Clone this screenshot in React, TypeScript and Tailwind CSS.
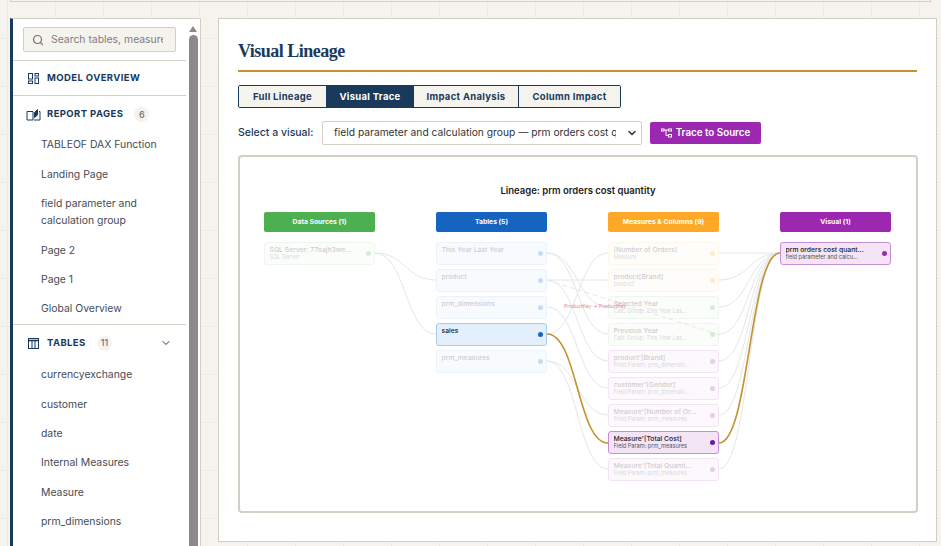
import { Search, ChevronDown } from "lucide-react";
import type { ReactNode } from "react";

const INK = "#1a3a5c";
const GOLD = "#c4922e";

type Tone = "green" | "blue" | "orange" | "purple";
type NodeT = { t: string; s?: string; dim?: boolean; strong?: boolean; tone?: Tone };

function DiagramNode({ n, tone }: { n: NodeT; tone: Tone }) {
  const cls = {
    green: "border-[#b5dfb7] bg-[#eef8ee]",
    blue: "border-[#a9cbee] bg-[#e3f0fc]",
    orange: "border-[#ffdca6] bg-[#fff7ea]",
    purple: "border-[#c98ad6] bg-[#f3e4f6]",
  }[tone];
  const strong = tone === "blue" ? "border-[#2a74c4]" : "border-[#7b3fa8]";
  const dot = {
    green: "bg-[#4caf50]",
    blue: "bg-[#1565c0]",
    orange: "bg-[#ffa726]",
    purple: n.strong ? "bg-[#6a1b9a]" : "bg-[#9c27b0]",
  }[tone];
  return (
    <div className={`relative h-[23px] w-[111px] rounded-[3px] border px-[4.500px] pt-[3px] ${cls} ${n.strong ? strong : ""} ${n.dim ? "opacity-[0.23]" : ""}`}>
      <div className="truncate pr-3 text-[6.800px] leading-[8px] font-medium text-[#222222]">{n.t}</div>
      {n.s && <div className="truncate pr-3 text-[5.600px] leading-[7px] text-[#555555]">{n.s}</div>}
      <span className={`absolute top-[8px] right-[3.500px] h-[5px] w-[5px] rounded-full ${dot}`} />
    </div>
  );
}

function Column({ title, color, nodes, tone }: { title: string; color: string; nodes: NodeT[]; tone: Tone }) {
  return (
    <div className="flex w-[111px] flex-col">
      <div className={`mb-[10px] flex h-[20px] items-center justify-center rounded-[2px] text-[6.800px] font-bold text-white ${color}`}>{title}</div>
      <div className="flex flex-col gap-[4px]">
        {nodes.map((n) => (
          <DiagramNode key={n.t} n={n} tone={n.tone ?? tone} />
        ))}
      </div>
    </div>
  );
}

const curve = (x1: number, y1: number, x2: number, y2: number) => {
  const m = (x1 + x2) / 2;
  return `M${x1} ${y1} C${m} ${y1} ${m} ${y2} ${x2} ${y2}`;
};

const faint: [number, number, number, number][] = [
  [375, 253, 436, 280],
  [375, 253, 436, 334],
  [547, 253, 608, 307],
  [547, 253, 608, 334],
  [547, 280, 608, 280],
  [547, 334, 608, 253],
  [547, 280, 608, 361],
  [547, 307, 608, 388],
  [547, 361, 608, 415],
  [547, 361, 608, 469],
  [719, 253, 780, 253],
  [719, 280, 780, 253],
  [719, 307, 780, 253],
  [719, 334, 780, 253],
  [719, 361, 780, 253],
  [719, 388, 780, 253],
  [719, 415, 780, 253],
  [719, 469, 780, 253],
];

function NavItem({ children }: { children: ReactNode }) {
  return <div className="py-[6.200px] pl-[28px] text-[10.400px] leading-[17px] text-[#444c56]">{children}</div>;
}

function Heading({ icon, label, badge, chevron }: { icon: ReactNode; label: string; badge?: string; chevron?: boolean }) {
  return (
    <div className="flex h-[15px] items-center pr-[14px] pl-[13px]">
      <span className="flex w-[21px] shrink-0 items-center">{icon}</span>
      <span className="text-[9.500px] font-bold tracking-[0.4px] whitespace-nowrap text-[#1a3a5c]">{label}</span>
      {badge && (
        <span className="ml-[11px] flex h-[15px] min-w-[15px] items-center justify-center rounded-full bg-[#f5f3ee] px-[4px] text-[9px] font-medium text-[#6b7280]">{badge}</span>
      )}
      {chevron && <ChevronDown className="ml-auto" size={12} color={INK} strokeWidth={2} />}
    </div>
  );
}

export default function App() {
  return (
    <div className="h-[546px] w-[941px] overflow-hidden bg-[#f5f3ee] bg-[linear-gradient(#eeebe4_1px,transparent_1px),linear-gradient(90deg,#eeebe4_1px,transparent_1px)] bg-[size:48px_48px] bg-[position:7px_38px] font-['Inter','Liberation_Sans',sans-serif]">
      <div className="mx-[10px] h-[2px] border-x border-b border-[#d4cfc4]" />
      <div className="flex items-start gap-[17px] pt-[16px] pl-[10px]">
        {/* Sidebar */}
        <aside className="flex h-[530px] w-[191px] shrink-0 overflow-hidden border-y border-r border-l-[3px] border-y-[#d4cfc4] border-r-[#d4cfc4] border-l-[#1a3a5c] bg-white">
          <div className="w-[173px] shrink-0">
            <div className="border-b border-[#d4cfc4] px-[10px] pt-[8px] pb-[8px]">
              <div className="flex h-[25px] w-[153px] items-center rounded-[2px] border border-[#d4cfc4] bg-[#f5f3ee] pl-[8px]">
                <Search size={12} color="#7a6f62" strokeWidth={2.4} className="shrink-0" />
                <span className="ml-[7px] w-[112px] overflow-hidden text-[10.400px] whitespace-nowrap text-[#7d7d7d]">Search tables, measures</span>
              </div>
            </div>
            <div className="flex h-[35px] items-center border-b border-[#d4cfc4]">
              <Heading
                label="MODEL OVERVIEW"
                icon={
                  <svg className="ml-[2px]" width="11" height="11" viewBox="0 0 11 11" fill="none" stroke={INK} strokeWidth="1">
                    <rect x="0.500" y="0.500" width="4" height="5.500" />
                    <rect x="7" y="0.500" width="3.500" height="2.500" />
                    <rect x="0.500" y="8" width="4" height="2.500" />
                    <rect x="7" y="5" width="3.500" height="5.500" />
                  </svg>
                }
              />
            </div>
            <div className="pt-[11px]">
              <Heading
                label="REPORT PAGES"
                badge="6"
                icon={
                  <svg width="15" height="12" viewBox="0 0 15 12" fill="none" stroke={INK} strokeWidth="1">
                    <path d="M1 2.500h6v8.500H1z" />
                    <path d="M8 11h6V2.500h-1" />
                    <path d="M8.500 8.500V3.500l3-3v5.500z" fill={INK} />
                  </svg>
                }
              />
            </div>
            <div className="pt-[8.300px]">
              <NavItem>TABLEOF DAX Function</NavItem>
              <NavItem>Landing Page</NavItem>
              <NavItem>
                field parameter and
                <br />
                calculation group
              </NavItem>
              <NavItem>Page 2</NavItem>
              <NavItem>Page 1</NavItem>
              <NavItem>Global Overview</NavItem>
            </div>
            <div className="border-t border-[#d4cfc4] pt-[11px]">
              <Heading
                label="TABLES"
                badge="11"
                chevron
                icon={
                  <svg className="ml-[2px]" width="11" height="11" viewBox="0 0 11 11" fill="none" stroke={INK} strokeWidth="1">
                    <rect x="0.500" y="0.500" width="10" height="10" />
                    <path d="M0.500 2.500h10" strokeWidth="1.600" />
                    <path d="M4 2.500v8M7 2.500v8" />
                  </svg>
                }
              />
            </div>
            <div className="pt-[9.500px]">
              <NavItem>currencyexchange</NavItem>
              <NavItem>customer</NavItem>
              <NavItem>date</NavItem>
              <NavItem>Internal Measures</NavItem>
              <NavItem>Measure</NavItem>
              <NavItem>prm_dimensions</NavItem>
            </div>
          </div>
          <div className="ml-[2.500px] flex w-[9px] shrink-0 flex-col items-center pt-[7px]">
            <span className="h-0 w-0 border-x-[4px] border-b-[6px] border-x-transparent border-b-[#8a8a8a]" />
            <span className="mt-[3px] w-[9px] flex-1 rounded-t-full bg-[#8a8a8a]" />
          </div>
        </aside>

        {/* Main */}
        <main className="h-[524px] w-[719px] shrink-0 border border-[#d4cfc4] bg-white px-[19px] pt-[20px]">
          <h1 className="h-[31px] font-['Liberation_Serif',serif] text-[18px] leading-[25px] font-bold tracking-[-0.5px] text-[#1a3a5c]">Visual Lineage</h1>
          <div className="h-[2px] bg-[#c4922e]" />
          <div className="mt-[13px] flex h-[23px] w-[383px] overflow-hidden rounded-[2px] border border-[#1a3a5c] text-[9.500px] leading-none font-bold tracking-[0.3px]">
            <button className="w-[87px] bg-[#f5f3ee] text-[#1a3a5c]">Full Lineage</button>
            <button className="w-[88px] bg-[#1a3a5c] text-white">Visual Trace</button>
            <button className="w-[105px] border-r border-[#1a3a5c] bg-[#f5f3ee] text-[#1a3a5c]">Impact Analysis</button>
            <button className="flex-1 bg-[#f5f3ee] text-[#1a3a5c]">Column Impact</button>
          </div>
          <div className="mt-[13px] flex items-center">
            <span className="w-[84px] text-[10.500px] font-medium text-[#1a3a5c]">Select a visual:</span>
            <div className="flex h-[24px] w-[320px] items-center rounded-[2px] border border-[#d4cfc4] bg-white pr-[3px] pl-[11px]">
              <span className="w-[282px] overflow-hidden text-[10.250px] whitespace-nowrap text-[#333333]">field parameter and calculation group — prm orders cost quantity</span>
              <ChevronDown size={12} strokeWidth={3} color="#333333" className="ml-auto" />
            </div>
            <button className="ml-[8px] flex h-[22px] w-[111px] items-center justify-center gap-[4px] rounded-[2px] bg-[#9c27b0] text-[9.800px] font-semibold text-white">
              <svg width="11" height="10" viewBox="0 0 11 10" fill="none" stroke="white" strokeWidth="1">
                <rect x="0.500" y="1" width="2.500" height="2" />
                <rect x="7.500" y="1" width="3" height="2" />
                <rect x="7.500" y="6.500" width="3" height="2.500" />
                <path d="M3 2h4.500M5 2v5.500h2.500" />
              </svg>
              Trace to Source
            </button>
          </div>

          {/* Diagram */}
          <div className="relative mt-[10px] h-[358px] w-[680px] rounded-[4px] border-2 border-[#d4cfc4] bg-white pt-[28px]">
            <svg className="absolute top-0 left-0" width="676" height="354" viewBox="240 157 676 354" fill="none">
              {faint.map(([a, b, c, d], i) => (
                <path key={i} d={curve(a, b, c, d)} stroke="#e4e7e7" strokeWidth="1" />
              ))}
              <path d="M547 280 L720 335" stroke="#efe4e4" strokeWidth="1" strokeDasharray="5 3" />
              <path d={curve(547, 334, 608, 443)} stroke={GOLD} strokeWidth="1.600" />
              <path d={curve(719, 443, 780, 253)} stroke={GOLD} strokeWidth="1.600" />
            </svg>
            <div className="relative text-center text-[9.500px] leading-[12px] font-semibold text-[#222222]">Lineage: prm orders cost quantity</div>
            <div className="relative mt-[15px] flex gap-[61px] pl-[24px]">
              <Column title="Data Sources (1)" color="bg-[#4caf50]" tone="green" nodes={[{ t: "SQL Server: 77oajh3we...", s: "SQL Server", dim: true }]} />
              <Column
                title="Tables (5)"
                color="bg-[#1565c0]"
                tone="blue"
                nodes={[
                  { t: "This Year Last Year", dim: true },
                  { t: "product", dim: true },
                  { t: "prm_dimensions", dim: true },
                  { t: "sales", strong: true },
                  { t: "prm_measures", dim: true },
                ]}
              />
              <Column
                title="Measures & Columns (9)"
                color="bg-[#ffa726]"
                tone="orange"
                nodes={[
                  { t: "[Number of Orders]", s: "Measure", dim: true },
                  { t: "product[Brand]", s: "product", dim: true },
                  { t: "Selected Year", s: "Calc Group: This Year Las...", dim: true, tone: "green" },
                  { t: "Previous Year", s: "Calc Group: This Year Las...", dim: true, tone: "green" },
                  { t: "product'[Brand]", s: "Field Param: prm_dimensio...", dim: true, tone: "purple" },
                  { t: "customer'[Gender]", s: "Field Param: prm_dimensio...", dim: true, tone: "purple" },
                  { t: "Measure'[Number of Or...", s: "Field Param: prm_measures", dim: true, tone: "purple" },
                  { t: "Measure'[Total Cost]", s: "Field Param: prm_measures", tone: "purple", strong: true },
                  { t: "Measure'[Total Quanti...", s: "Field Param: prm_measures", dim: true, tone: "purple" },
                ]}
              />
              <Column title="Visual (1)" color="bg-[#9c27b0]" tone="purple" nodes={[{ t: "prm orders cost quant...", s: "field parameter and calcu..." }]} />
            </div>
            <span className="absolute top-[146px] left-[324px] text-[5px] leading-[7px] whitespace-nowrap text-[#e08a8a]">ProductKey → ProductKey</span>
          </div>
        </main>
      </div>
    </div>
  );
}
